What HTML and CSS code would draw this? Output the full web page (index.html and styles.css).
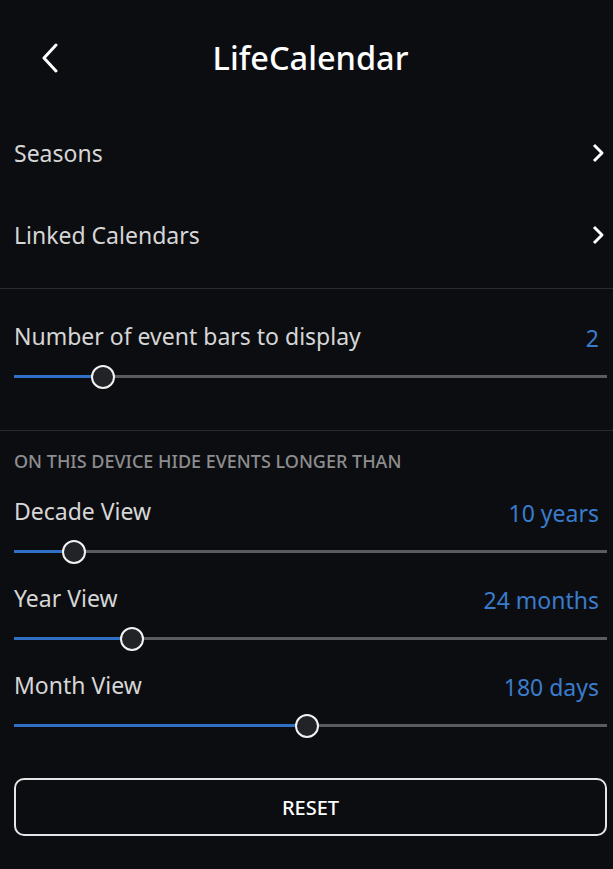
FILE: index.html
```html
<!DOCTYPE html>
<html lang="en">
<head>
  <meta charset="UTF-8">
  <title>LifeCalendar Settings</title>
  <meta name="viewport" content="width=613, initial-scale=1">
  <link rel="stylesheet" href="styles.css">
</head>
<body>
  <div class="screen">
    <header class="topbar">
      <button class="back" aria-label="Back">
        <svg width="20" height="30" viewBox="0 0 20 30"><path d="M16 2 L4 15 L16 28" fill="none" stroke="#fff" stroke-width="3" stroke-linecap="round" stroke-linejoin="round"/></svg>
      </button>
      <h1>LifeCalendar</h1>
    </header>

    <div class="nav-row">
      <span>Seasons</span>
      <svg class="chev" width="14" height="20" viewBox="0 0 14 20"><path d="M3 2 L11 10 L3 18" fill="none" stroke="#fff" stroke-width="3" stroke-linejoin="round"/></svg>
    </div>
    <div class="nav-row">
      <span>Linked Calendars</span>
      <svg class="chev" width="14" height="20" viewBox="0 0 14 20"><path d="M3 2 L11 10 L3 18" fill="none" stroke="#fff" stroke-width="3" stroke-linejoin="round"/></svg>
    </div>

    <section class="group first">
      <div class="setting">
        <div class="setting-head">
          <span>Number of event bars to display</span>
          <span class="value">2</span>
        </div>
        <div class="slider"><div class="fill" style="width:14.8%"></div><div class="thumb" style="left:14.8%"></div></div>
      </div>
    </section>

    <section class="group">
      <div class="group-title">ON THIS DEVICE HIDE EVENTS LONGER THAN</div>
      <div class="setting">
        <div class="setting-head">
          <span>Decade View</span>
          <span class="value">10 years</span>
        </div>
        <div class="slider"><div class="fill" style="width:9.9%"></div><div class="thumb" style="left:9.9%"></div></div>
      </div>
      <div class="setting">
        <div class="setting-head">
          <span>Year View</span>
          <span class="value">24 months</span>
        </div>
        <div class="slider"><div class="fill" style="width:19.7%"></div><div class="thumb" style="left:19.7%"></div></div>
      </div>
      <div class="setting">
        <div class="setting-head">
          <span>Month View</span>
          <span class="value">180 days</span>
        </div>
        <div class="slider"><div class="fill" style="width:49.2%"></div><div class="thumb" style="left:49.2%"></div></div>
      </div>
      <button class="reset">RESET</button>
    </section>
  </div>
</body>
</html>
```

FILE: styles.css
```css
body { margin: 0; background: #0c0d11; font-family: 'Noto Sans', 'Open Sans', sans-serif; color: #d6d6d6; }
.screen { width: 613px; min-height: 869px; }

.topbar { height: 112px; display: flex; align-items: center; justify-content: center; position: relative; }
.topbar h1 { margin: 2px 0 0 8px; font-size: 32.5px; font-weight: 500; color: #fff; }
.back { position: absolute; left: 40px; top: 43px; background: none; border: none; padding: 0; cursor: pointer; }

.nav-row { height: 82px; display: flex; align-items: center; justify-content: space-between; padding: 0 8px 0 14px; font-size: 23px; }
.chev { display: block; }

.group { border-top: 1px solid #2a2b30; padding: 0 6px 0 14px; }
.group.first { margin-top: 12px; padding-top: 32px; padding-bottom: 22px; }
.group-title { font-size: 18px; font-weight: 500; color: #8d8d90; margin: 20px 0 25px; line-height: 20px; }

.setting { margin-bottom: 30px; }
.setting-head { display: flex; justify-content: space-between; align-items: flex-end; font-size: 23px; line-height: 30px; padding-right: 8px; }
.value { color: #3a7ccc; line-height: 25px; }

.slider { position: relative; height: 3px; background: #5b5b5e; margin-top: 24px; }
.fill { height: 100%; background: #2f70c4; }
.thumb { position: absolute; top: 50%; width: 20px; height: 20px; margin: -12px 0 0 -11px; border: 2px solid #f2f2f2; border-radius: 50%; background: #222327; }

.reset { display: block; width: 593px; height: 58px; margin: 51px 0 0; background: #0c0d11; border: 2px solid #e6e6e6; border-radius: 10px; color: #fff; font-family: inherit; font-size: 20px; font-weight: 500; cursor: pointer; }
```
